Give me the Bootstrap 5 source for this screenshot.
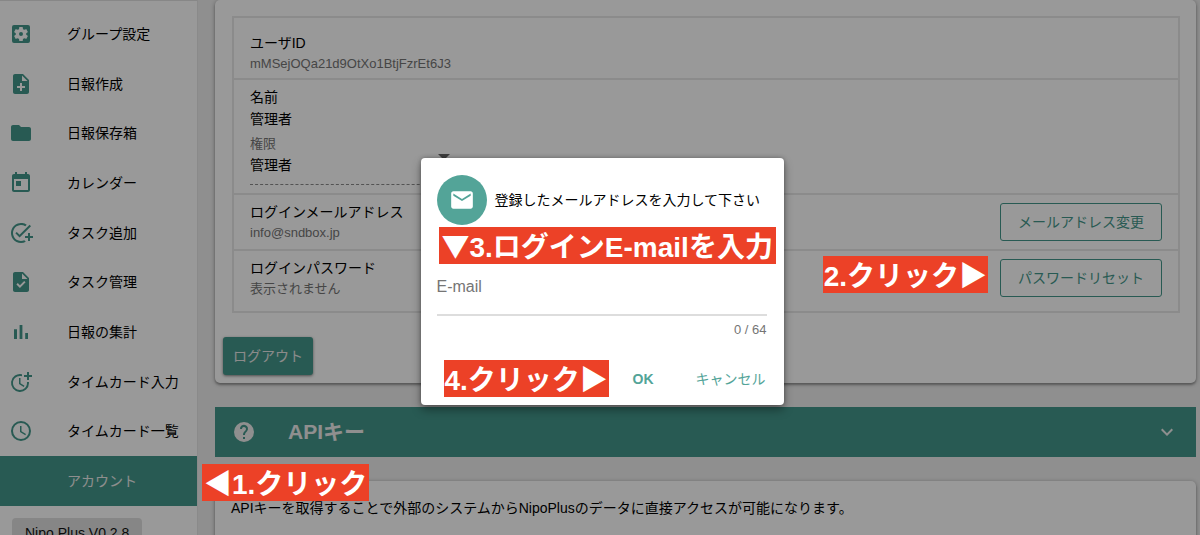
<!DOCTYPE html>
<html lang="ja">
<head>
<meta charset="utf-8">
<meta name="viewport" content="width=device-width, initial-scale=1">
<title>Nipo Plus</title>
<link rel="stylesheet" href="https://cdn.jsdelivr.net/npm/bootstrap@5.3.0/dist/css/bootstrap.min.css">
<style>
:root{--teal:#44978a;--teal-light:#53a498;--note:#ec4127}
body{font-family:"Liberation Sans","Noto Sans CJK JP",sans-serif;font-size:14px;line-height:22px;color:#000;background:#eee}
.shell{height:100vh}
.side{width:198px;border-right:1px solid #e6e6e6;border-top:1px solid #e2e2e2;padding-top:8px}
.side-list{display:grid;grid-auto-rows:1fr;min-height:497px}
.side-list a{display:grid;grid-template-columns:58px 1fr;align-items:center;padding-left:9px;color:#000;text-decoration:none}
.side-list svg{width:24px;height:24px;fill:var(--teal)}
.side-list a.current{background:var(--teal);color:#ededed}
.version{margin:12px 0 0 12px;padding:4px 13px;background:#e0e0e0;border:0;border-radius:4px;font-size:14px;line-height:22px;color:#111}
.content-area{padding:0 4px 0 17px}
.panel{background:#fff;border-radius:5px;box-shadow:0 1px 4px rgba(0,0,0,.35),0 2px 2px rgba(0,0,0,.2)}
.profile{border:2px solid #e8e8e8;margin:0 16px 0 17px}
.profile>div{padding:6px 16px}
.profile>div+div{border-top:2px solid #e8e8e8}
.profile>div:first-child{padding-top:14px;padding-bottom:4px}
.profile>div:last-child{padding-bottom:12px}
.sub{font-size:13px;line-height:20px;color:#757575}
.role-box{width:200px;border-bottom:1px dashed #8a8a8a}
.role-box select{appearance:none;border:0;background:none;padding:0;color:#000;width:180px;height:20px;line-height:20px}
.role-box label{display:block}
.role-box svg{top:24px}
.btn-line{border:1px solid var(--teal);color:var(--teal);border-radius:3px;font-size:14px;line-height:22px;padding:7px 16px;min-width:162px}
.btn-out{background:var(--teal);color:#e8e8e8;border-radius:3px;font-size:14px;line-height:22px;padding:7px 9px;min-width:90px;box-shadow:0 1px 3px rgba(0,0,0,.5)}
.section-bar{background:var(--teal);color:#eee;width:100%;height:50px;border:0;padding:0 17px;font-size:21px;font-weight:700}
.section-bar svg{fill:#eee}
.dim{z-index:10;background:rgba(0,0,0,.4);padding:27px 0 0 4px}
.ask{width:363px;background:#fff;border-radius:4px;box-shadow:0 5px 10px rgba(0,0,0,.35),0 0 4px rgba(0,0,0,.3);padding:17px 17px 7px 16px}
.mail-disc{width:50px;height:50px;background:var(--teal-light)}
.mail-field{display:block;width:100%;height:56px;margin:35px 0 4px;border:0;border-bottom:2px solid #ddd;border-radius:0;font-size:16px;padding:0;outline:0;background:none}
.mail-field::placeholder{color:#757575;opacity:1}
.actions{gap:40px;margin-top:20px}
.btn-flat{color:var(--teal-light);font-size:14px;line-height:22px;padding:7px 0}
.note{position:absolute;background:var(--note);color:#fff;font-weight:700;font-size:28px;line-height:37px;height:37px;padding:0 1px;white-space:nowrap;z-index:20}
.note b{font-family:"Noto Sans CJK JP",sans-serif}
.note-1{left:202px;top:464px;padding:0 2px}
.note-2{right:212px;top:256px}
.note-3{left:18px;top:69px;padding:0 3px}
.note-4{left:23px;top:202px}
</style>
</head>
<body>
<div class="shell position-relative overflow-hidden">
<div class="d-flex h-100">
  <aside class="side bg-white flex-shrink-0">
    <nav class="side-list">
      <a href="#"><svg viewBox="0 0 24 24"><path fill-rule="evenodd" d="M5 3h14a2 2 0 0 1 2 2v14a2 2 0 0 1-2 2H5a2 2 0 0 1-2-2V5a2 2 0 0 1 2-2zm12.250 9c0-.23-.02-.46-.05-.68l1.480-1.160c.13-.11.17-.3.08-.45l-1.400-2.420c-.09-.15-.27-.21-.43-.15l-1.740.7c-.36-.28-.75-.51-1.180-.69l-.26-1.850a.36.36 0 0 0-.35-.3h-2.800c-.17 0-.32.13-.35.3l-.26 1.850c-.43.18-.82.41-1.180.69l-1.740-.7c-.16-.06-.34 0-.43.15l-1.400 2.420c-.09.15-.05.34.08.45l1.480 1.160a5 5 0 0 0 0 1.360l-1.480 1.160c-.13.11-.17.3-.08.45l1.400 2.420c.09.15.27.21.43.15l1.740-.7c.36.28.75.51 1.180.69l.26 1.850c.03.17.18.3.35.3h2.800c.17 0 .32-.13.35-.3l.26-1.850c.43-.18.82-.41 1.180-.69l1.740.7c.16.06.34 0 .43-.15l1.400-2.420c.09-.15.05-.34-.08-.45l-1.480-1.160c.03-.22.05-.45.05-.68zM12 10a2 2 0 1 1 0 4 2 2 0 0 1 0-4z"/></svg><span>グループ設定</span></a>
      <a href="#"><svg viewBox="0 0 24 24"><path d="M14 2H6c-1.100 0-2 .9-2 2v16c0 1.100.89 2 1.990 2H18c1.100 0 2-.9 2-2V8l-6-6zm2 14h-3v3h-2v-3H8v-2h3v-3h2v3h3v2zm-3-7V3.500L18.500 9H13z"/></svg><span>日報作成</span></a>
      <a href="#"><svg viewBox="0 0 24 24"><path d="M10 4H4c-1.100 0-2 .9-2 2v12c0 1.100.9 2 2 2h16c1.100 0 2-.9 2-2V8c0-1.100-.9-2-2-2h-8l-2-2z"/></svg><span>日報保存箱</span></a>
      <a href="#"><svg viewBox="0 0 24 24"><path d="M19 3h-1V1h-2v2H8V1H6v2H5c-1.110 0-2 .9-2 2v14c0 1.100.89 2 2 2h14c1.100 0 2-.9 2-2V5c0-1.100-.9-2-2-2zm0 16H5V8h14v11zM7 10h5v5H7z"/></svg><span>カレンダー</span></a>
      <a href="#"><svg viewBox="0 0 24 24"><path d="M22 5.180 10.590 16.600l-4.240-4.240 1.410-1.410 2.830 2.830 10-10L22 5.180zM12 20c-4.410 0-8-3.590-8-8s3.590-8 8-8c1.570 0 3.040.46 4.280 1.250l1.450-1.450A10 10 0 1 0 12 22c1.730 0 3.360-.44 4.780-1.220l-1.500-1.500c-1 .46-2.110.72-3.280.72zm7-5h-3v2h3v3h2v-3h3v-2h-3v-3h-2v3z"/></svg><span>タスク追加</span></a>
      <a href="#"><svg viewBox="0 0 24 24"><path d="M14 2H6c-1.100 0-2 .9-2 2v16c0 1.100.89 2 1.990 2H18c1.100 0 2-.9 2-2V8l-6-6zm-3.060 16L7.400 14.460l1.410-1.410 2.120 2.120 4.240-4.240 1.410 1.410L10.940 18zM13 9V3.500L18.500 9H13z"/></svg><span>タスク管理</span></a>
      <a href="#"><svg viewBox="0 0 24 24"><path d="M5 9.200h3V19H5zM10.600 5h2.800v14h-2.800zm5.600 8H19v6h-2.800z"/></svg><span>日報の集計</span></a>
      <a href="#"><svg viewBox="0 0 24 24"><path d="M10 8v6l4.700 2.900.8-1.200-4-2.400V8zM17.920 12c.05.33.08.66.08 1 0 3.900-3.100 7-7 7s-7-3.100-7-7 3.100-7 7-7c.7 0 1.370.1 2 .29V4.230A9 9 0 1 0 20 13c0-.34-.02-.67-.06-1h-2.020zM20 5V2h-2v3h-3v2h3v3h2V7h3V5z"/></svg><span>タイムカード入力</span></a>
      <a href="#"><svg viewBox="0 0 24 24"><path d="M11.990 2a10 10 0 1 0 0 20 10 10 0 0 0 0-20zM12 20a8 8 0 1 1 0-16 8 8 0 0 1 0 16zm.5-13H11v6l5.250 3.150.75-1.230-4.500-2.670z"/></svg><span>タイムカード一覧</span></a>
      <a href="#" class="current" aria-current="page"><i></i><span>アカウント</span></a>
    </nav>
    <button type="button" class="version">Nipo Plus V0.2.8</button>
  </aside>

  <main class="content-area flex-grow-1">
    <section class="panel pt-3 pb-2">
      <div class="profile">
        <div>
          <div>ユーザID</div>
          <div class="sub">mMSejOQa21d9OtXo1BtjFzrEt6J3</div>
        </div>
        <div class="pb-2">
          <div>名前</div>
          <div>管理者</div>
          <div class="role-box pt-1 pb-2 position-relative">
            <label for="role" class="sub">権限</label>
            <select id="role"><option>管理者</option></select>
            <svg class="position-absolute end-0" width="12" height="6" viewBox="0 0 12 6" fill="#666"><path d="M0 0h12L6 6z"/></svg>
          </div>
        </div>
        <div class="d-flex justify-content-between align-items-center">
          <div><div>ログインメールアドレス</div><div class="sub">info@sndbox.jp</div></div>
          <button type="button" class="btn btn-line">メールアドレス変更</button>
        </div>
        <div class="d-flex justify-content-between align-items-center">
          <div><div>ログインパスワード</div><div class="sub">表示されません</div></div>
          <button type="button" class="btn btn-line">パスワードリセット</button>
        </div>
      </div>
      <button type="button" class="btn btn-out ms-2 mt-4">ログアウト</button>
    </section>

    <button type="button" class="section-bar d-flex align-items-center my-4" aria-expanded="true">
      <svg width="24" height="24" viewBox="0 0 24 24"><path d="M12 2a10 10 0 1 0 0 20 10 10 0 0 0 0-20zm1 17h-2v-2h2v2zm2.070-7.750-.9.920C13.450 12.900 13 13.500 13 15h-2v-.5c0-1.100.45-2.100 1.170-2.830l1.240-1.260A2 2 0 1 0 10 9H8a4 4 0 1 1 7.070 2.250z"/></svg>
      <span class="ms-3 ps-3">APIキー</span>
      <svg class="ms-auto" width="24" height="24" viewBox="0 0 24 24"><path d="M7.410 8.590 12 13.170l4.590-4.580L18 10l-6 6-6-6z"/></svg>
    </button>

    <section class="panel p-3 pb-5">
      <p class="mb-5">APIキーを取得することで外部のシステムからNipoPlusのデータに直接アクセスが可能になります。</p>
    </section>
  </main>
</div>

<div class="dim position-absolute top-0 start-0 w-100 h-100 d-flex justify-content-center align-items-center">
  <form class="ask position-relative" role="dialog" aria-label="パスワードリセット">
    <div class="d-flex align-items-center gap-2">
      <span class="mail-disc rounded-circle d-flex align-items-center justify-content-center flex-shrink-0">
        <svg width="26" height="26" viewBox="0 0 24 24" fill="#fff"><path d="M20 4H4c-1.100 0-1.990.9-1.990 2L2 18c0 1.100.9 2 2 2h16c1.100 0 2-.9 2-2V6c0-1.100-.9-2-2-2zm0 4-8 5-8-5V6l8 5 8-5v2z"/></svg>
      </span>
      <label for="mail" class="text-nowrap">登録したメールアドレスを入力して下さい</label>
    </div>
    <input id="mail" type="email" maxlength="64" class="mail-field" placeholder="E-mail">
    <div class="sub text-end">0 / 64</div>
    <div class="actions d-flex justify-content-end">
      <button type="button" class="btn btn-flat fw-bold">OK</button>
      <button type="button" class="btn btn-flat">キャンセル</button>
    </div>
    <div class="note note-3"><b>▼</b>3.ログインE-mailを入力</div>
    <div class="note note-4">4.クリック<b>▶</b></div>
  </form>
</div>
<div class="note note-1"><b>◀</b>1.クリック</div>
<div class="note note-2">2.クリック<b>▶</b></div>
</div>
<script src="https://cdn.jsdelivr.net/npm/bootstrap@5.3.0/dist/js/bootstrap.bundle.min.js"></script>
</body>
</html>
